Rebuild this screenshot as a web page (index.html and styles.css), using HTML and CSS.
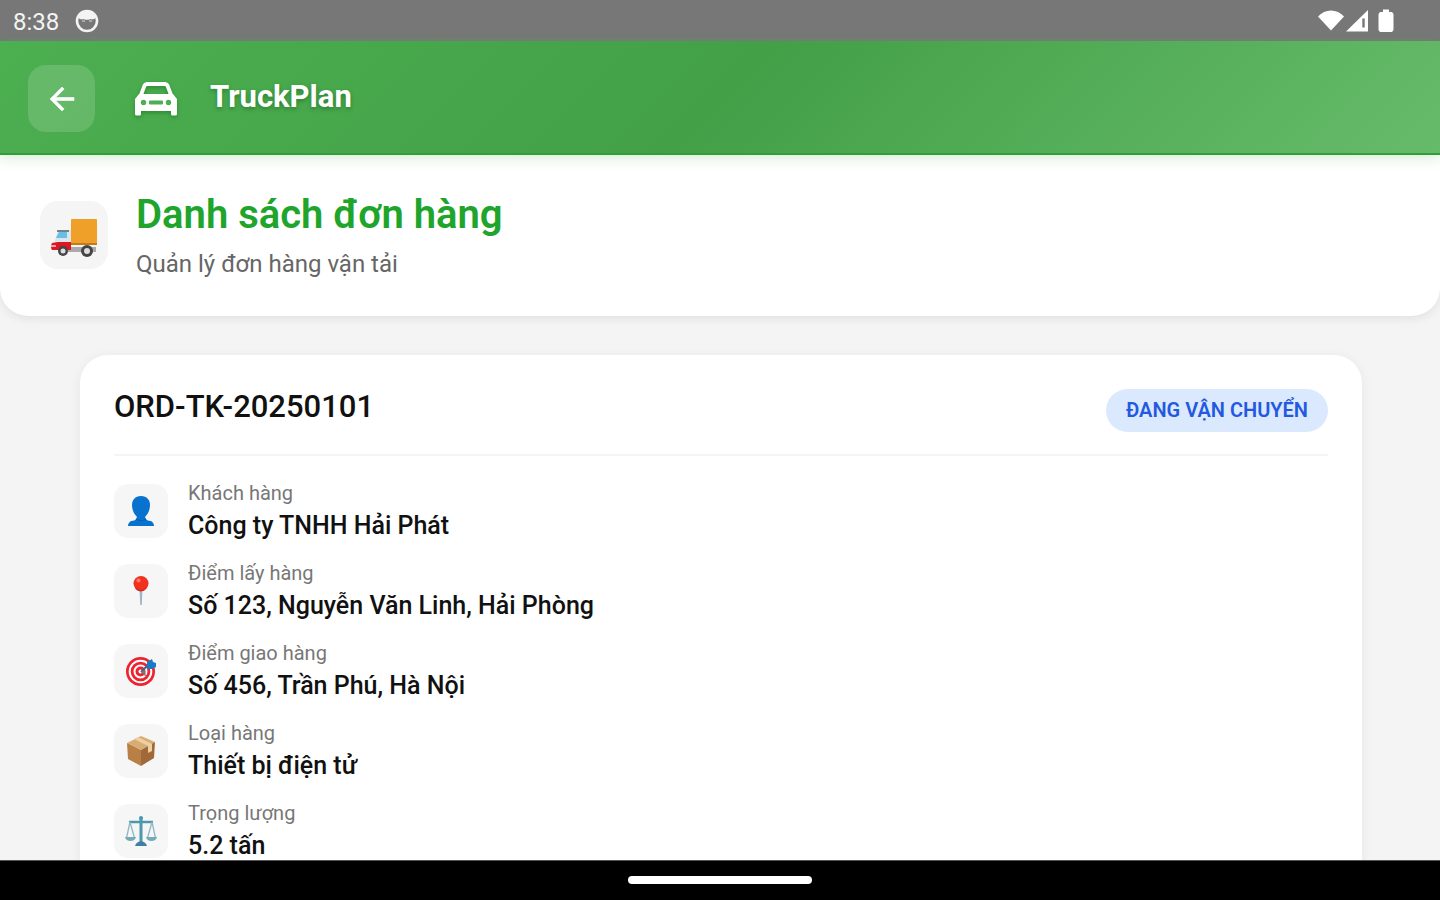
FILE: index.html
```html
<!DOCTYPE html>
<html lang="vi">
<head>
<meta charset="utf-8">
<meta name="viewport" content="width=device-width, initial-scale=1">
<title>TruckPlan</title>
<link rel="stylesheet" href="styles.css">
</head>
<body>
<div class="screen">
  <div class="status-bar">
    <div class="status-left">
      <span class="clock">8:38</span>
      <svg class="face-icon" viewBox="0 0 24 24" aria-hidden="true"><circle cx="12" cy="12" r="10" fill="none" stroke="#f4f4f4" stroke-width="2.6"/><path d="M3 9C4 4 7 2 12 2s8 2 9 7c-2 1-4 2-5 1-2 1-6 1-8 0-1 1-3 0-5-1z" fill="#f4f4f4"/><path d="M7 12h3M14 12h3" stroke="#bbb" stroke-width="1.500"/></svg>
    </div>
    <div class="status-right">
      <svg width="28" height="24" viewBox="0 0 28 24" aria-hidden="true"><path d="M1 7.500C8 -.5 20 -.5 27 7.500L14 21.500z" fill="#fff"/></svg>
      <svg width="24" height="24" viewBox="0 0 24 24" aria-hidden="true"><path d="M1 22.500L23 1v21.500z" fill="#fff"/><path d="M18.500 9.500v9" stroke="#777" stroke-width="2.400"/></svg>
      <svg class="battery" width="16" height="24" viewBox="0 0 16 24" aria-hidden="true"><path d="M5 .5h6V3h3l1.500 2v16L14 23H2L.5 21V5L2 3h3z" fill="#fff"/></svg>
    </div>
  </div>

  <header class="app-bar">
    <button class="back" type="button" aria-label="Quay lại"><svg width="36" height="36" viewBox="0 0 24 24" aria-hidden="true"><path d="M20 11H7.830l5.590-5.590L12 4l-8 8 8 8 1.410-1.410L7.830 13H20z" fill="#fff" stroke="#fff" stroke-width=".4"/></svg></button>
    <svg class="car" width="42" height="34" viewBox="0 0 42 34" aria-hidden="true"><path d="M6 13L9.500 3.500Q10.300 2 12 2h18q1.700 0 2.500 1.500L36 13" fill="none" stroke="#fff" stroke-width="3.800"/><path d="M0 17l4-5h34l4 5v15q0 1.500-1.500 1.500h-3Q36 33.500 36 32v-3H6v3q0 1.500-1.500 1.500h-3Q0 33.500 0 32z" fill="#fff"/><g fill="#4fae53"><circle cx="8.500" cy="20.500" r="2.700"/><circle cx="33.500" cy="20.500" r="2.700"/><rect x="14" y="18.500" width="14" height="4" rx="1"/></g></svg>
    <span class="brand">TruckPlan</span>
  </header>

  <main class="content">
    <section class="page-head">
      <div class="head-icon">
        <svg width="50" height="50" viewBox="0 0 50 50" aria-hidden="true"><path d="M19 37h28v5H19z" fill="#aaa"/><rect x="22" y="9" width="26" height="25" rx="1" fill="#eea029"/><path d="M22 33h26v2H22z" fill="#c77919"/><path d="M9 20h13v14H5z" fill="#dce5ec"/><path d="M10 22h8v6H7z" fill="#65bfe8"/><path d="M8 21h12" stroke="#55616a" stroke-width="1.500"/><path d="M3 33l6-1h13v8H3q-2-3 0-7z" fill="#d91823"/><path d="M2 36h5" stroke="#f5a49d" stroke-width="2"/><g fill="#444"><circle cx="14" cy="41" r="5"/><circle cx="38" cy="41" r="6"/></g><g fill="#ddd"><circle cx="14" cy="41" r="2.500"/><circle cx="38" cy="41" r="3"/></g></svg>
      </div>
      <div class="head-text">
        <h1>Danh sách đơn hàng</h1>
        <p>Quản lý đơn hàng vận tải</p>
      </div>
    </section>

    <article class="order">
      <div class="order-head">
        <h2>ORD-TK-20250101</h2>
        <span class="badge">ĐANG VẬN CHUYỂN</span>
      </div>
      <dl class="details">
        <div class="detail">
          <div class="tile"><svg width="32" height="32" viewBox="0 0 32 32" aria-hidden="true"><path d="M16 1c6 0 9 4 9 9 0 5-2 9-5 12 1 3 3 4 6 4 2 1 3 3 3 5H3c0-2 1-4 3-5 3 0 5-1 6-4-3-3-5-7-5-12 0-5 3-9 9-9z" fill="#0872cf"/><path d="M11 24c3 2 7 2 10 0" stroke="#0759b4" fill="none"/></svg></div>
          <div class="text"><dt>Khách hàng</dt><dd>Công ty TNHH Hải Phát</dd></div>
        </div>
        <div class="detail">
          <div class="tile"><svg width="32" height="32" viewBox="0 0 32 32" aria-hidden="true"><path d="M14.500 14h3L16.800 30h-1.600z" fill="#9db8c2"/><circle cx="16" cy="8.500" r="7.500" fill="#f0321f"/><path d="M10 12c4 4 9 4 12-1-1 7-11 7-12 1z" fill="#d32620"/><circle cx="13.500" cy="5.500" r="2" fill="#ff7d67"/></svg></div>
          <div class="text"><dt>Điểm lấy hàng</dt><dd>Số 123, Nguyễn Văn Linh, Hải Phòng</dd></div>
        </div>
        <div class="detail">
          <div class="tile"><svg width="32" height="32" viewBox="0 0 32 32" aria-hidden="true"><circle cx="15.500" cy="16.500" r="14.500" fill="#ed2430"/><circle cx="15.500" cy="16.500" r="10.800" fill="none" stroke="#fff" stroke-width="2"/><circle cx="15.500" cy="16.500" r="6" fill="none" stroke="#fff" stroke-width="2"/><circle cx="15.500" cy="16.500" r="2" fill="#fff"/><path d="M16 17l9-9" stroke="#42647c" stroke-width="2"/><path d="M16 17l5 5-1-7z" fill="#777"/><path d="M22 7l5-3 1 3 3 1v4l-4 2h-5z" fill="#187bc9"/></svg></div>
          <div class="text"><dt>Điểm giao hàng</dt><dd>Số 456, Trần Phú, Hà Nội</dd></div>
        </div>
        <div class="detail">
          <div class="tile"><svg width="32" height="32" viewBox="0 0 32 32" aria-hidden="true"><path d="M2 8l14-7 14 6-14 8z" fill="#d9ac75"/><path d="M2 8l14 7v16L3 24z" fill="#b98045"/><path d="M16 15l14-8-1 16-13 8z" fill="#a1683a"/><path d="M9 4l14 7v7l4-2V9L13 2z" fill="#ecd0a2"/></svg></div>
          <div class="text"><dt>Loại hàng</dt><dd>Thiết bị điện tử</dd></div>
        </div>
        <div class="detail">
          <div class="tile"><svg width="32" height="32" viewBox="0 0 32 32" aria-hidden="true"><g fill="none" stroke="#4c98ad"><path d="M4 7h24" stroke-width="2.500"/><path d="M16 2v25" stroke-width="3"/><path d="M5 7L1.500 23M5 7l4.500 16M27 7l-4.500 16M27 7l3.500 16" stroke="#8db9c4" stroke-width="1.300"/></g><path d="M0 22h11q-1 4-5.500 4T0 22zM21 22h11q-1 4-5.500 4T21 22z" fill="#75abb8"/><path d="M10 31q1-4 6-5 5 1 6 5z" fill="#3f7fa4"/><circle cx="16" cy="3" r="2" fill="#4c98ad"/></svg></div>
          <div class="text"><dt>Trọng lượng</dt><dd>5.2 tấn</dd></div>
        </div>
      </dl>
    </article>
  </main>

  <div class="nav-bar"><div class="handle"></div></div>
</div>
</body>
</html>
```
FILE: styles.css
```css
* { box-sizing: border-box; }

body {
  margin: 0;
  font-family: Roboto, "Noto Sans", sans-serif;
  color: #111;
  background: #f4f4f4;
}

h1, h2, p, dl, dt, dd { margin: 0; }
svg { display: block; flex: none; }

.screen {
  display: flex;
  flex-direction: column;
  height: 100vh;
  overflow: hidden;
}

.status-bar {
  flex: none;
  display: flex;
  justify-content: space-between;
  align-items: center;
  padding: 8px 46px 7px 13px;
  background: #777;
}

.status-left { display: flex; align-items: center; gap: 16px; }
.status-right { display: flex; align-items: center; }
.battery { margin-left: 9px; }

.clock {
  padding-top: 2px;
  font-size: 24px;
  line-height: 24px;
  color: #f4f4f4;
}

.face-icon { width: 24px; height: 24px; }

.app-bar {
  flex: none;
  position: relative;
  z-index: 1;
  display: flex;
  align-items: center;
  padding: 24px 28px 21px;
  background: linear-gradient(135deg, #4caf50 0%, #43a047 50%, #66bb6a 100%);
  border-bottom: 2px solid #2fa037;
  box-shadow: 0 2px 14px rgba(76, 175, 80, 0.25);
}

.back {
  display: grid;
  place-items: center;
  width: 67px;
  height: 67px;
  padding: 0;
  border: 0;
  border-radius: 18px;
  background: rgba(255, 255, 255, 0.15);
}

.car {
  margin: 0 33px 0 40px;
  filter: drop-shadow(0 2px 2px rgba(0, 90, 10, 0.4));
}

.brand {
  padding-bottom: 3px;
  font-size: 31px;
  line-height: 40px;
  font-weight: 700;
  color: #fff;
  text-shadow: 0 2px 4px rgba(0, 70, 10, 0.4);
}

.content { flex: 1; min-height: 0; overflow: hidden; }

.page-head {
  display: flex;
  align-items: center;
  gap: 28px;
  padding: 34px 40px 36px;
  background: #fff;
  border-radius: 0 0 28px 28px;
  box-shadow: 0 3px 10px rgba(0, 0, 0, 0.08);
}

.head-icon {
  display: grid;
  place-items: center;
  width: 68px;
  height: 68px;
  border-radius: 18px;
  background: #f5f5f5;
}

.head-text h1 {
  font-size: 40px;
  line-height: 52px;
  font-weight: 600;
  color: #20a52c;
}

.head-text p {
  margin-top: 7px;
  font-size: 24px;
  line-height: 32px;
  color: #666;
}

.order {
  margin: 39px 78px 40px 80px;
  padding: 34px;
  background: #fff;
  border-radius: 28px;
  box-shadow: 0 2px 12px rgba(0, 0, 0, 0.06);
}

.order-head {
  display: flex;
  justify-content: space-between;
  align-items: flex-start;
  padding-bottom: 22px;
  border-bottom: 2px solid #f4f4f4;
}

.order-head h2 {
  font-size: 31px;
  line-height: 36px;
  font-weight: 500;
}

.badge {
  padding: 6px 20px 7px;
  border-radius: 22px;
  background: #dbe9ff;
  color: #2459df;
  font-size: 20px;
  line-height: 30px;
  font-weight: 600;
}

.details {
  display: flex;
  flex-direction: column;
  gap: 18px;
  padding-top: 24px;
}

.detail { display: flex; align-items: center; gap: 20px; }

.tile {
  display: grid;
  place-items: center;
  width: 54px;
  height: 54px;
  border-radius: 14px;
  background: #f6f6f6;
}

.detail dt {
  font-size: 20px;
  line-height: 26px;
  color: #777;
}

.detail dd {
  margin-top: 4px;
  font-size: 25px;
  line-height: 32px;
  font-weight: 500;
}

.nav-bar {
  flex: none;
  display: flex;
  justify-content: center;
  padding: 15px 0 16px;
  background: #000;
  border-top: 1px solid #555;
  z-index: 1;
}

.handle {
  width: 184px;
  height: 8px;
  border-radius: 4px;
  background: #fff;
}
```
